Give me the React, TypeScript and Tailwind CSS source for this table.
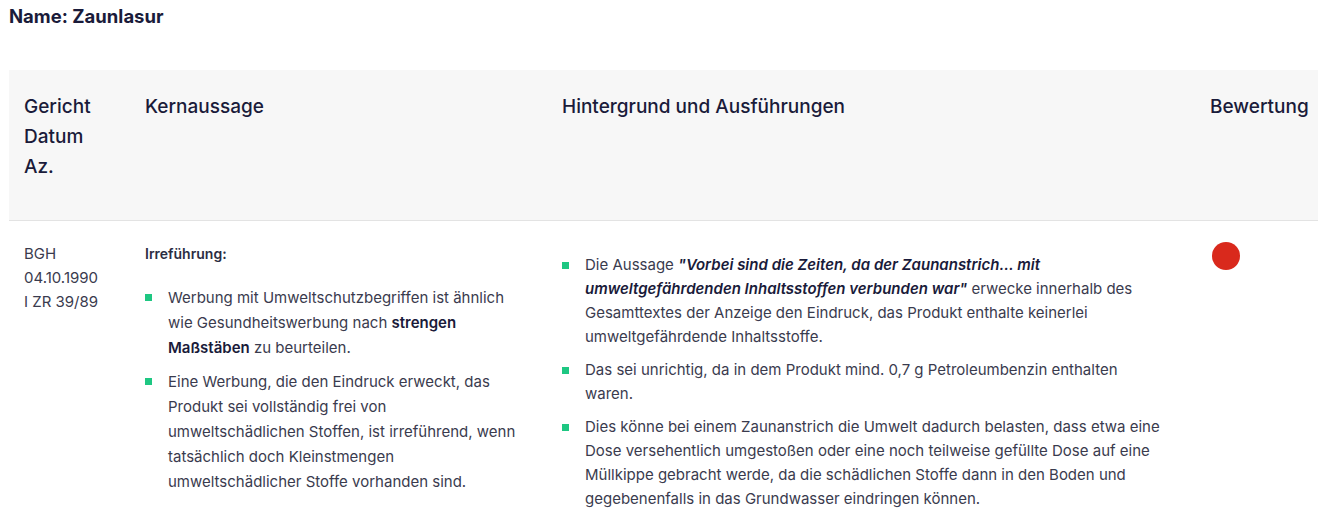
import React from 'react'

const font = { fontFamily: 'Inter, "Noto Sans", sans-serif' }

function Bullet({ children, lh }: { children: React.ReactNode; lh: string }) {
  return (
    <li className={`flex ${lh} mb-[9px]`}>
      <span className="flex h-[25px] w-[23px] shrink-0 items-center">
        <span className="block h-[7px] w-[7px] bg-[#1ec782]" />
      </span>
      <span>{children}</span>
    </li>
  )
}

export default function App() {
  return (
    <div className="bg-white min-h-[518px] text-[#2b2d42]" style={font}>
      <h2 className="pl-[9px] pt-[5px] text-[18.5px] font-bold leading-[22px] text-[#1a1b3a]">
        Name: Zaunlasur
      </h2>

      <div className="ml-[9px] mt-[43px] w-[1309px]">
        {/* Kopfzeile */}
        <div className="grid h-[151px] grid-cols-[121px_417px_648px_123px] border-b border-[#e3e3e3] bg-[#f7f7f7] pt-[22px] text-[19px] font-medium leading-[30px] text-[#1a1b3a]">
          <div className="pl-[15px]">
            Gericht
            <br />
            Datum
            <br />
            Az.
          </div>
          <div className="pl-[15px]">Kernaussage</div>
          <div className="pl-[15px]">Hintergrund und Ausführungen</div>
          <div className="pl-[15px]">Bewertung</div>
        </div>

        {/* Eintrag */}
        <div className="grid grid-cols-[121px_417px_648px_123px] pt-[21px] text-[15px] text-[#3a3b4e]">
          <div className="pl-[15px] leading-[24px]">
            BGH
            <br />
            04.10.1990
            <br />I ZR 39/89
          </div>

          <div className="pl-[15px] pr-[27px]">
            <p className="text-[14px] font-semibold leading-[24px] text-[#2b2d42]">Irreführung:</p>
            <ul className="mt-[19px]">
              <Bullet lh="leading-[25px]">
                Werbung mit Umweltschutzbegriffen ist ähnlich wie Gesundheitswerbung nach{' '}
                <strong className="font-semibold text-[#1a1b3a]">strengen Maßstäben</strong> zu beurteilen.
              </Bullet>
              <Bullet lh="leading-[25px]">
                Eine Werbung, die den Eindruck erweckt, das Produkt sei vollständig frei von
                umweltschädlichen Stoffen, ist irreführend, wenn tatsächlich doch Kleinstmengen
                umweltschädlicher Stoffe vorhanden sind.
              </Bullet>
            </ul>
          </div>

          <div className="pl-[15px] pr-[30px]">
            <ul className="mt-[11px]">
              <Bullet lh="leading-[24px]">
                Die Aussage{' '}
                <em className="font-semibold text-[#1a1b3a]">
                  "Vorbei sind die Zeiten, da der Zaunanstrich... mit umweltgefährdenden Inhaltsstoffen
                  verbunden war"
                </em>{' '}
                erwecke innerhalb des Gesamttextes der Anzeige den Eindruck, das Produkt enthalte
                keinerlei umweltgefährdende Inhaltsstoffe.
              </Bullet>
              <Bullet lh="leading-[24px]">
                Das sei unrichtig, da in dem Produkt mind. 0,7 g Petroleumbenzin enthalten waren.
              </Bullet>
              <Bullet lh="leading-[24px]">
                Dies könne bei einem Zaunanstrich die Umwelt dadurch belasten, dass etwa eine Dose
                versehentlich umgestoßen oder eine noch teilweise gefüllte Dose auf eine Müllkippe
                gebracht werde, da die schädlichen Stoffe dann in den Boden und gegebenenfalls in das
                Grundwasser eindringen können.
              </Bullet>
            </ul>
          </div>

          <div className="pl-[17px]">
            <span className="block h-[28px] w-[28px] rounded-full bg-[#d9291c]" />
          </div>
        </div>
      </div>
    </div>
  )
}
